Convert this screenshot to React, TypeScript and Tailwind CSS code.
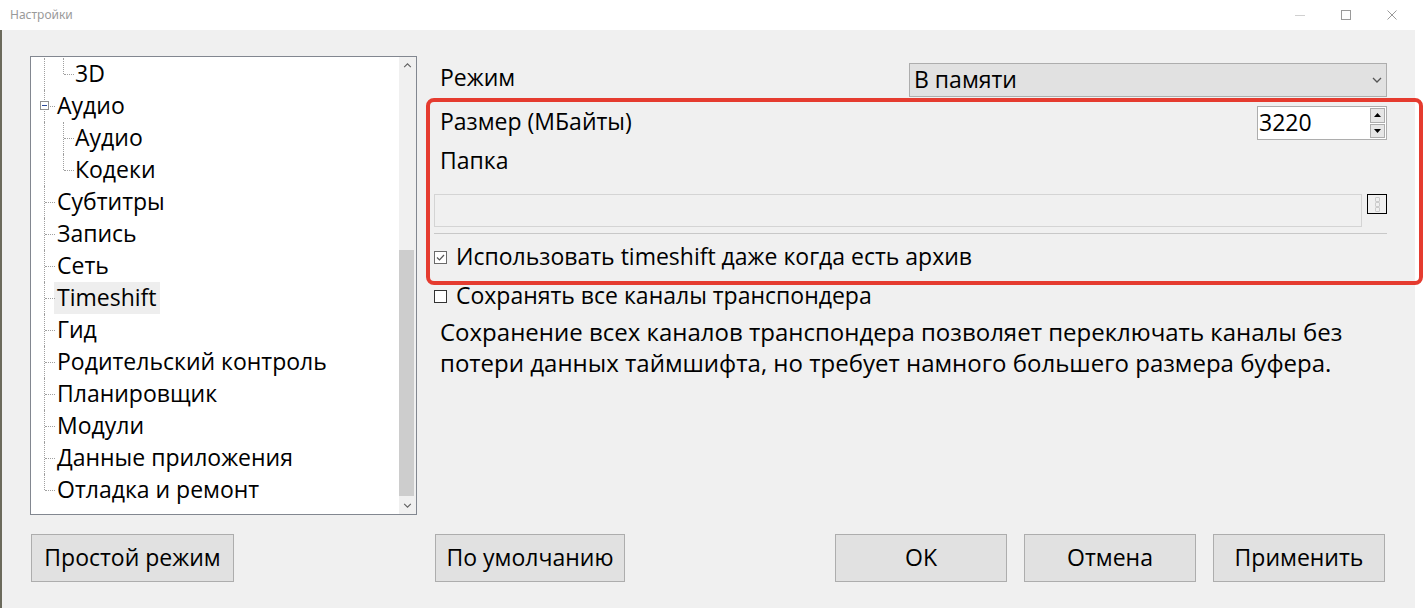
import React from 'react';

type TreeNode = { label: string; level: 0 | 1; last?: boolean; box?: boolean; selected?: boolean };

const TREE: TreeNode[] = [
  { label: '3D', level: 1, last: true },
  { label: 'Аудио', level: 0, box: true },
  { label: 'Аудио', level: 1 },
  { label: 'Кодеки', level: 1, last: true },
  { label: 'Субтитры', level: 0 },
  { label: 'Запись', level: 0 },
  { label: 'Сеть', level: 0 },
  { label: 'Timeshift', level: 0, selected: true },
  { label: 'Гид', level: 0 },
  { label: 'Родительский контроль', level: 0 },
  { label: 'Планировщик', level: 0 },
  { label: 'Модули', level: 0 },
  { label: 'Данные приложения', level: 0 },
  { label: 'Отладка и ремонт', level: 0, last: true },
];

function Chevron({ up = false, className = '' }: { up?: boolean; className?: string }) {
  return (
    <svg viewBox="0 0 10 6" className={className} fill="none">
      <path d={up ? 'M1 5 L5 1 L9 5' : 'M1 1 L5 5 L9 1'} stroke="currentColor" strokeWidth="1.3" />
    </svg>
  );
}

function TreeRow({ node }: { node: TreeNode }) {
  const rootLast = node.level === 0 && node.last;
  return (
    <div className="relative h-[32px] flex items-center">
      {/* root connector */}
      <span
        className={`absolute left-[13px] top-0 w-0 border-l border-dotted border-[#a0a0a0] ${
          rootLast ? 'h-1/2' : 'bottom-0'
        }`}
      />
      {node.level === 0 && (
        <span className="absolute left-[14px] top-1/2 w-[10px] h-0 border-t border-dotted border-[#a0a0a0]" />
      )}
      {node.level === 1 && (
        <>
          <span
            className={`absolute left-[32px] top-0 w-0 border-l border-dotted border-[#a0a0a0] ${
              node.last ? 'h-1/2' : 'bottom-0'
            }`}
          />
          <span className="absolute left-[33px] top-1/2 w-[10px] h-0 border-t border-dotted border-[#a0a0a0]" />
        </>
      )}
      {node.box && (
        <span className="absolute left-[9px] top-[11px] w-[9px] h-[9px] bg-white border border-[#919191] flex items-center justify-center">
          <span className="w-[5px] h-[1px] bg-[#2c4a9a]" />
        </span>
      )}
      <span
        className={`px-[3px] pb-[2px] h-full flex items-center whitespace-nowrap ${
          node.level === 0 ? 'ml-[23px]' : 'ml-[41px]'
        } ${node.selected ? 'bg-[#eeeeee]' : ''}`}
      >
        {node.label}
      </span>
    </div>
  );
}

function Checkbox({ checked, label }: { checked?: boolean; label: string }) {
  return (
    <div className="h-[30px] flex items-center">
      <span
        className={`w-[13px] h-[13px] border bg-white flex items-center justify-center ${
          checked ? 'border-[#6a6a6a]' : 'border-[#333333]'
        }`}
      >
        {checked && (
          <svg viewBox="0 0 11 11" className="w-[11px] h-[11px]" fill="none">
            <path d="M2 5.5 L4.5 8 L9 3" stroke="#555555" strokeWidth="1.2" />
          </svg>
        )}
      </span>
      <span className="ml-[9px] pb-[2px] whitespace-nowrap">{label}</span>
    </div>
  );
}

function WinButton({ label, className = '' }: { label: string; className?: string }) {
  return (
    <button className={`h-[48px] bg-[#e1e1e1] border border-[#adadad] flex items-center justify-center pb-[2px] ${className}`}>
      {label}
    </button>
  );
}

export default function App() {
  return (
    <div className="relative w-[1424px] h-[608px] overflow-hidden bg-white text-black text-[23px] leading-none font-['Open_Sans',sans-serif]">
      {/* Title bar */}
      <div className="h-[30px] flex items-center bg-white">
        <span className="ml-[10px] text-[12px] text-[#9a9a9a] font-['Noto_Sans',sans-serif]">Настройки</span>
        <div className="ml-auto mr-[9px] flex h-full">
          <div className="w-[46px] flex items-center justify-center">
            <span className="w-[10px] h-[1px] bg-[#d0d0d0]" />
          </div>
          <div className="w-[46px] flex items-center justify-center">
            <span className="w-[10px] h-[10px] border border-[#9a9a9a]" />
          </div>
          <div className="w-[46px] flex items-center justify-center">
            <svg viewBox="0 0 10 10" className="w-[10px] h-[10px]" fill="none">
              <path d="M0.5 0.5 L9.5 9.5 M9.5 0.5 L0.5 9.5" stroke="#9a9a9a" strokeWidth="1" />
            </svg>
          </div>
        </div>
      </div>

      <div className="flex h-[578px]">
        {/* Window body */}
        <div className="w-[1415px] bg-[#f0f0f0] border-l-2 border-[#6b6a5c] pl-[28px] pt-[26px] flex flex-col">
          <div className="flex gap-[16px]">
            {/* Tree */}
            <div className="w-[387px] h-[459px] bg-white border border-[#828790] flex">
              <div className="flex-1 pt-[1px] overflow-hidden">
                {TREE.map((n, i) => (
                  <TreeRow key={i} node={n} />
                ))}
              </div>
              <div className="w-[17px] bg-[#f0f0f0] flex flex-col">
                <div className="h-[17px] flex items-center justify-center text-[#606060]">
                  <Chevron up className="w-[9px] h-[5px]" />
                </div>
                <div className="flex-1 flex flex-col justify-end pb-[1px]">
                  <div className="h-[246px] w-[15px] bg-[#cdcdcd]" />
                </div>
                <div className="h-[17px] flex items-center justify-center text-[#606060]">
                  <Chevron className="w-[9px] h-[5px]" />
                </div>
              </div>
            </div>

            {/* Settings panel */}
            <div className="w-[954px] flex flex-col">
              <div className="mt-[7px] h-[34px] flex items-center">
                <span className="pl-[7px] pb-[6px] flex-1">Режим</span>
                <div className="w-[478px] h-[34px] bg-[#e1e1e1] border border-[#adadad] flex items-center pl-[4px] pr-[4px]">
                  <span className="flex-1 pb-[2px]">В памяти</span>
                  <Chevron className="w-[10px] h-[6px] text-[#555555]" />
                </div>
              </div>

              <div className="mt-[9px] h-[34px] flex items-center">
                <span className="pl-[7px] pb-[4px] flex-1">Размер (МБайты)</span>
                <div className="w-[130px] h-[34px] bg-white border border-[#adadad] flex">
                  <span className="flex-1 pl-[1px] pb-[2px] flex items-center text-[23px]">3220</span>
                  <div className="w-[16px] flex flex-col gap-[1px] py-[1px] pr-[1px]">
                    <div className="flex-1 bg-[#e6e6e6] border border-[#adadad] flex items-center justify-center">
                      <svg viewBox="0 0 7 4" className="w-[7px] h-[4px]">
                        <path d="M0 4 L3.5 0 L7 4 Z" fill="#000" />
                      </svg>
                    </div>
                    <div className="flex-1 bg-[#e6e6e6] border border-[#adadad] flex items-center justify-center">
                      <svg viewBox="0 0 7 4" className="w-[7px] h-[4px]">
                        <path d="M0 0 L3.5 4 L7 0 Z" fill="#000" />
                      </svg>
                    </div>
                  </div>
                </div>
              </div>

              <div className="mt-[6px] h-[30px] flex items-center pl-[7px] pb-[2px]">Папка</div>

              <div className="mt-[18px] flex items-start gap-[5px] pl-[1px]">
                <div className="flex-1 h-[33px] bg-[#f0f0f0] border border-[#d4d4d4]" />
                <div className="w-[20px] h-[20px] border border-black flex flex-col items-center justify-center">
                  <span className="w-[5px] h-[5px] rounded-[1px] border border-[#cccccc]" />
                  <span className="w-[5px] h-[5px] rounded-[1px] border border-[#cccccc]" />
                  <span className="w-[5px] h-[5px] rounded-[1px] border border-[#cccccc]" />
                </div>
              </div>

              <div className="mt-[6px] ml-[1px] h-[1px] bg-[#c8c8c8]" />

              <div className="mt-[8px] pl-[1px]">
                <Checkbox checked label="Использовать timeshift даже когда есть архив" />
              </div>
              <div className="mt-[9px] pl-[1px]">
                <Checkbox label="Сохранять все каналы транспондера" />
              </div>

              <p className="mt-[5px] pl-[7px] text-[24px] leading-[31px] whitespace-nowrap">
                Сохранение всех каналов транспондера позволяет переключать каналы без
                <br />
                потери данных таймшифта, но требует намного большего размера буфера.
              </p>
            </div>
          </div>

          {/* Buttons */}
          <div className="mt-[19px] flex gap-[16px]">
            <div className="w-[387px] pl-[1px]">
              <WinButton label="Простой режим" className="w-[203px]" />
            </div>
            <div className="w-[954px] flex items-center px-[2px]">
              <WinButton label="По умолчанию" className="w-[190px]" />
              <div className="ml-auto flex gap-[17px]">
                <WinButton label="OK" className="w-[172px]" />
                <WinButton label="Отмена" className="w-[172px]" />
                <WinButton label="Применить" className="w-[172px]" />
              </div>
            </div>
          </div>
        </div>
        <div className="flex-1 bg-white" />
      </div>

      {/* Red annotation frame */}
      <div className="absolute left-[426px] top-[98px] w-[997px] h-[187px] border-[4px] border-[#e53b2f] rounded-[8px] pointer-events-none" />
    </div>
  );
}
